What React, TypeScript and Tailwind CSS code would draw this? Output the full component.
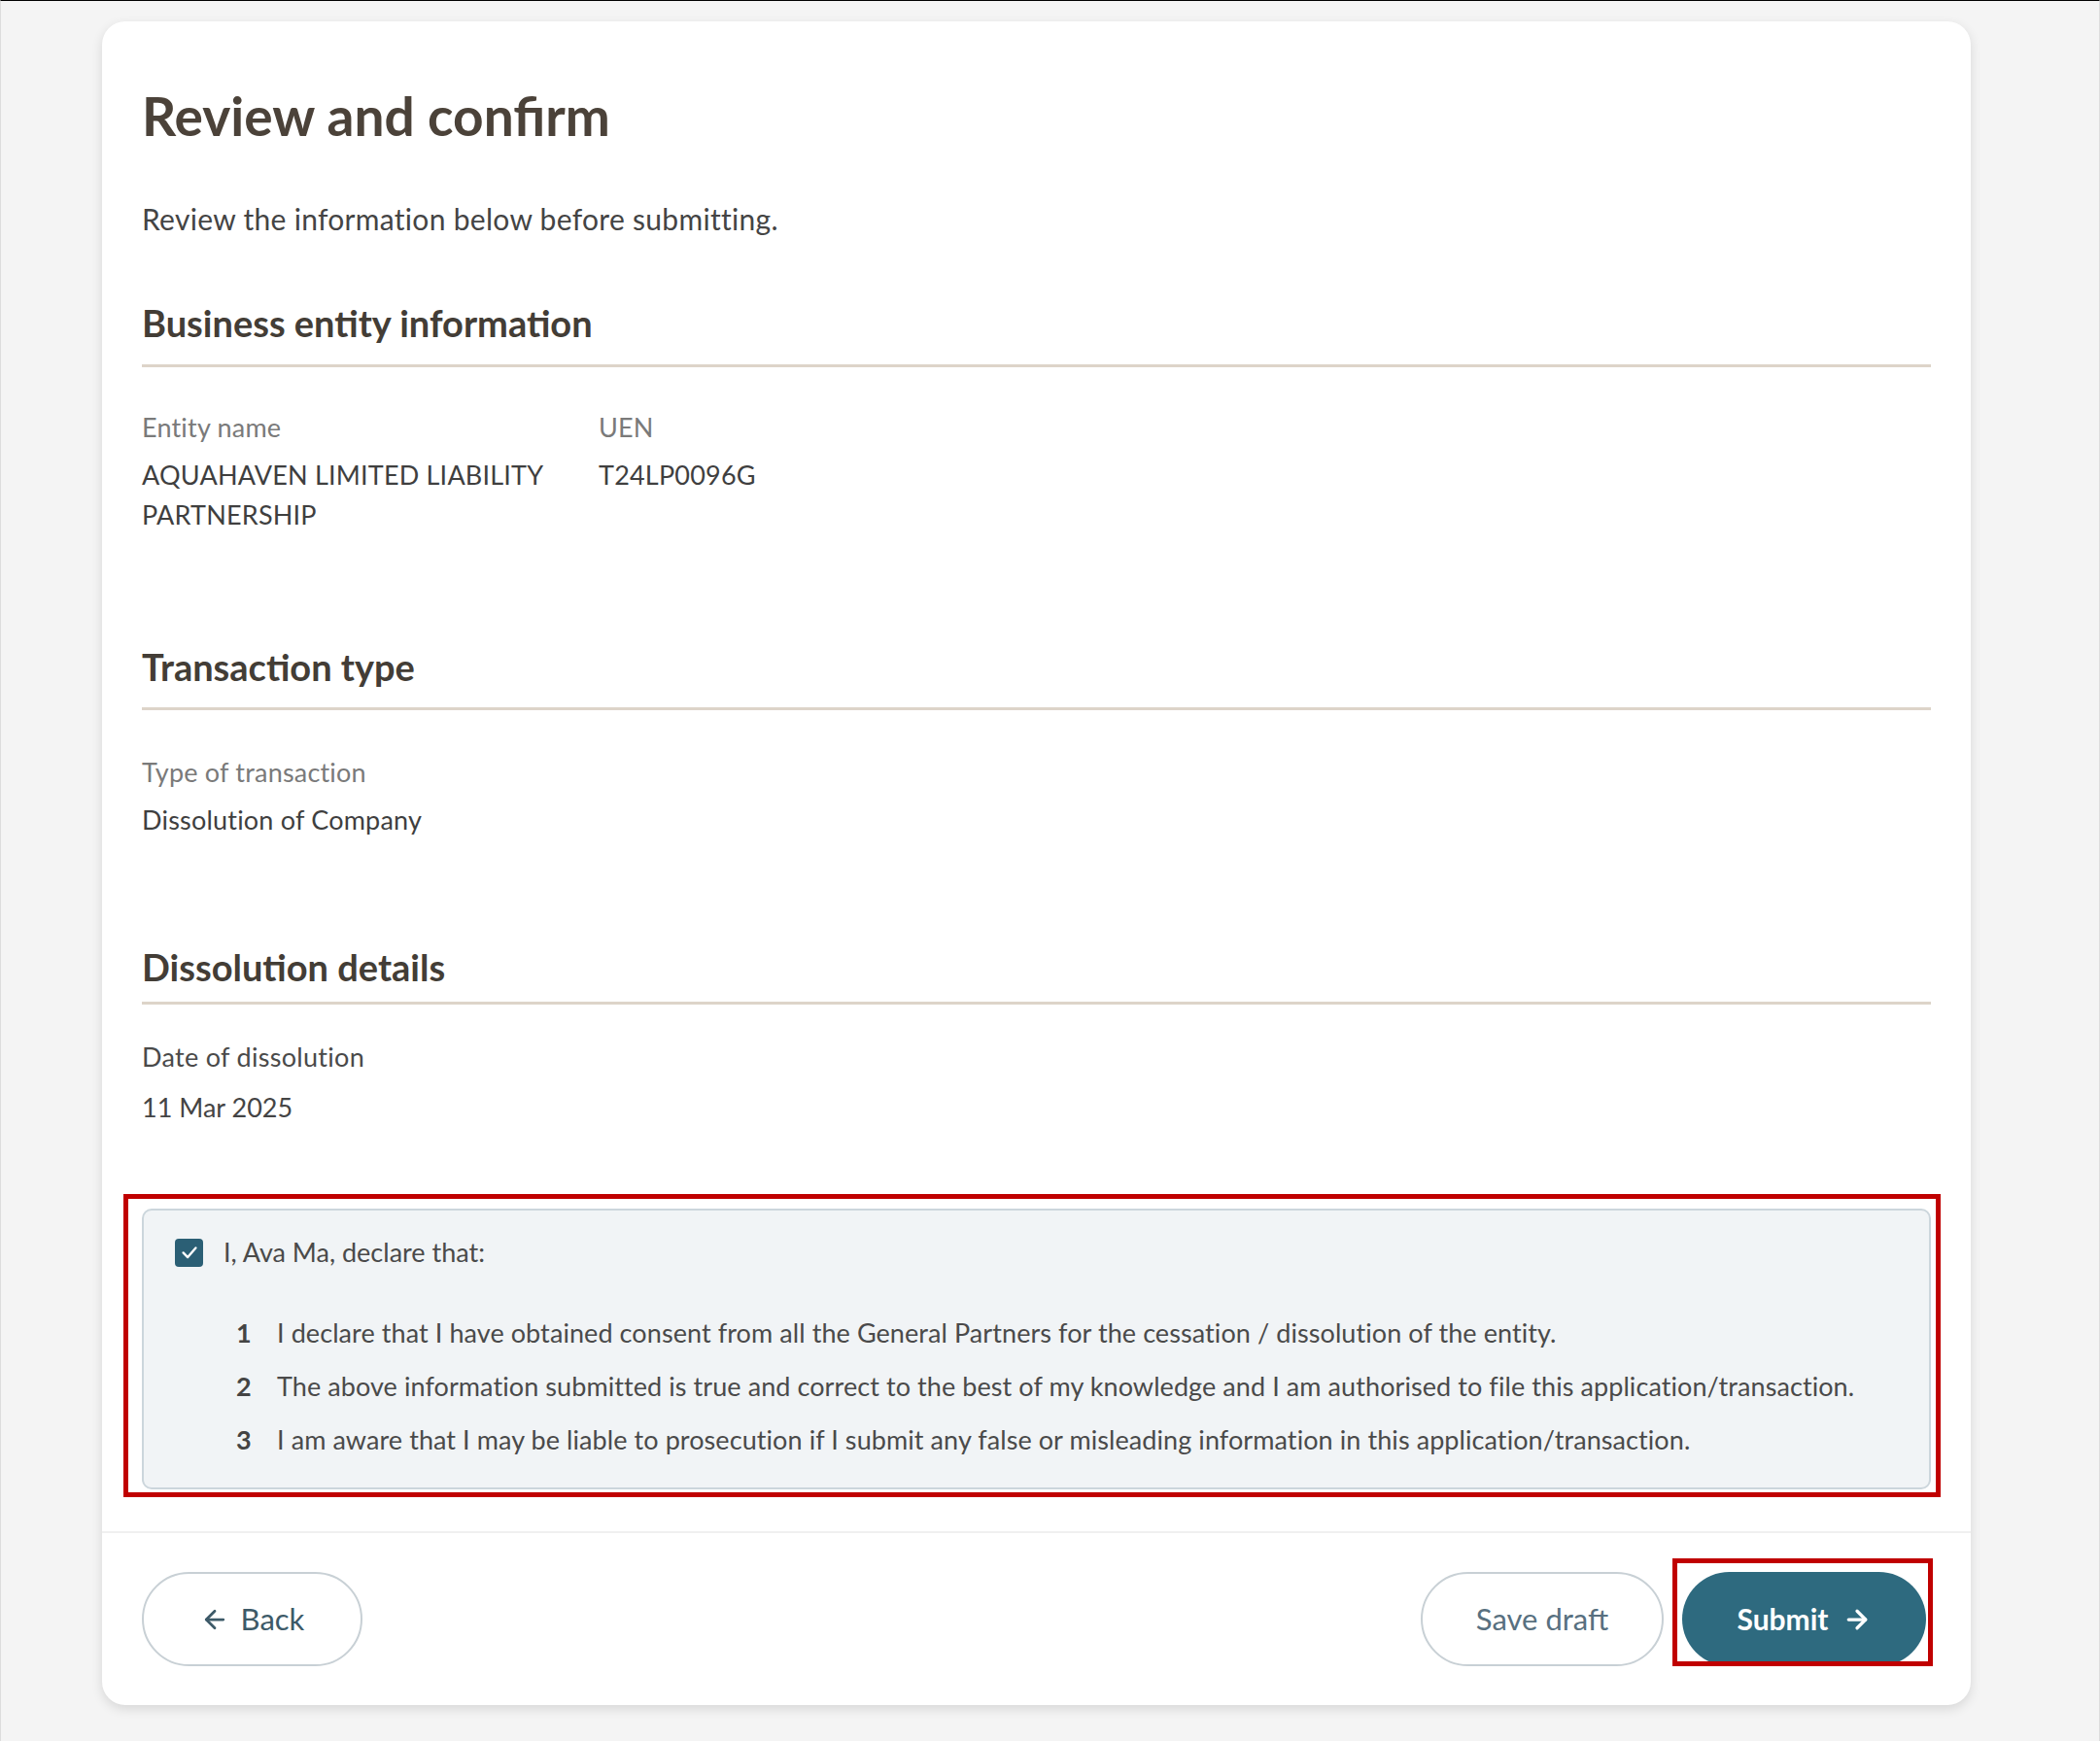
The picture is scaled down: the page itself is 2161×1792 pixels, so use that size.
import { ArrowLeft, ArrowRight } from "lucide-react";

function Field({ label, value, dark }: { label: string; value: string; dark?: boolean }) {
  return (
    <div>
      <p className={dark ? "text-[27px] leading-[34px] tracking-[0.3px] text-[#4a4a4a]" : "text-[27px] leading-[34px] tracking-[0.2px] text-[#7a7a7a]"}>
        {label}
      </p>
      <p className={dark ? "mt-[18px] text-[27px] leading-[34px] text-[#444]" : "mt-[11px] text-[27px] leading-[41px] tracking-[0.2px] text-[#3f3f3f]"}>
        {value}
      </p>
    </div>
  );
}

function SectionTitle({ children, gap }: { children: string; gap: string }) {
  return (
    <>
      <h2 className="text-[38px] leading-[46px] font-bold text-[#433d36]">{children}</h2>
      <div className={`${gap} h-[3px] bg-[#ddd4c9]`} />
    </>
  );
}

const declarations = [
  "I declare that I have obtained consent from all the General Partners for the cessation / dissolution of the entity.",
  "The above information submitted is true and correct to the best of my knowledge and I am authorised to file this application/transaction.",
  "I am aware that I may be liable to prosecution if I submit any false or misleading information in this application/transaction.",
];

export default function App() {
  return (
    <div className="min-h-screen bg-[#f4f4f4] border-t border-x border-t-black border-x-[#dcdcdc] pt-[21px] font-[Lato,'Noto_Sans',sans-serif]">
      <div className="ml-[104px] w-[1923px] rounded-[24px] bg-white shadow-[0_4px_12px_rgba(0,0,0,0.12)]">
        <div className="px-[41px] pt-[64px] pb-[35px]">
          <h1 className="text-[55px] leading-[66px] font-bold text-[#4b4239]">Review and confirm</h1>
          <p className="mt-[53px] text-[30px] leading-[40px] tracking-[0.3px] text-[#444]">
            Review the information below before submitting.
          </p>

          <section className="mt-[64px]">
            <SectionTitle gap="mt-[20px]">Business entity information</SectionTitle>
            <div className="mt-[45px] flex">
              <div className="w-[470px] pr-[20px]">
                <Field label="Entity name" value="AQUAHAVEN LIMITED LIABILITY PARTNERSHIP" />
              </div>
              <Field label="UEN" value="T24LP0096G" />
            </div>
          </section>

          <section className="mt-[113px]">
            <SectionTitle gap="mt-[19px]">Transaction type</SectionTitle>
            <div className="mt-[47px]">
              <Field label="Type of transaction" value="Dissolution of Company" />
            </div>
          </section>

          <section className="mt-[108px]">
            <SectionTitle gap="mt-[13px]">Dissolution details</SectionTitle>
            <div className="mt-[37px]">
              <Field label="Date of dissolution" value="11 Mar 2025" dark />
            </div>
          </section>

          <div className="mt-[72px] -ml-[19px] -mr-[10px] border-[5px] border-[#c00000] pl-[14px] pr-[5px] pt-[10px] pb-[3px]">
            <div className="rounded-[10px] border-2 border-[#ccd6dc] bg-[#f1f4f6] pl-[32px] pr-[32px] pt-[26px] pb-[32px]">
              <label className="flex items-center gap-[21px]">
                <span className="flex h-[29px] w-[29px] items-center justify-center rounded-[4px] bg-[#2b5f75]">
                  <svg viewBox="0 0 24 24" className="h-[22px] w-[22px]" fill="none" stroke="white" strokeWidth="2.6" strokeLinecap="round" strokeLinejoin="round">
                    <polyline points="5 12.5 10 17.5 19 7" />
                  </svg>
                </span>
                <span className="text-[27px] leading-[34px] text-[#4a4a4a]">I, Ava Ma, declare that:</span>
              </label>
              <ol className="mt-[49px] flex flex-col gap-[21px] pl-[63px]">
                {declarations.map((d, i) => (
                  <li key={i} className="flex text-[27px] leading-[34px] tracking-[0.08px] text-[#4a4a4a]">
                    <span className="w-[42px] shrink-0 font-bold text-[#444]">{i + 1}</span>
                    <span>{d}</span>
                  </li>
                ))}
              </ol>
            </div>
          </div>
        </div>

        <div className="flex items-center justify-between border-t-2 border-[#f0f0f0] pl-[41px] pr-[46px] pt-[40px] pb-[40px]">
          <button className="flex h-[97px] w-[227px] items-center justify-center gap-[12px] rounded-full border-2 border-[#c8d0d5] text-[31px] text-[#3d5a68]">
            <ArrowLeft className="h-[30px] w-[30px]" strokeWidth={2.2} />
            Back
          </button>
          <div className="flex items-center gap-[19px]">
            <button className="h-[97px] w-[250px] rounded-full border-2 border-[#c8d0d5] text-[31px] text-[#587080]">
              Save draft
            </button>
            <div className="relative">
              <button className="flex h-[97px] w-[251px] items-center justify-center gap-[14px] rounded-full bg-[#2e6a7f] text-[30px] font-bold text-white">
                Submit
                <ArrowRight className="h-[30px] w-[30px]" strokeWidth={2.6} />
              </button>
              <div className="pointer-events-none absolute -left-[10px] -right-[7px] -top-[14px] bottom-0 border-[5px] border-[#c00000]" />
            </div>
          </div>
        </div>
      </div>
    </div>
  );
}
